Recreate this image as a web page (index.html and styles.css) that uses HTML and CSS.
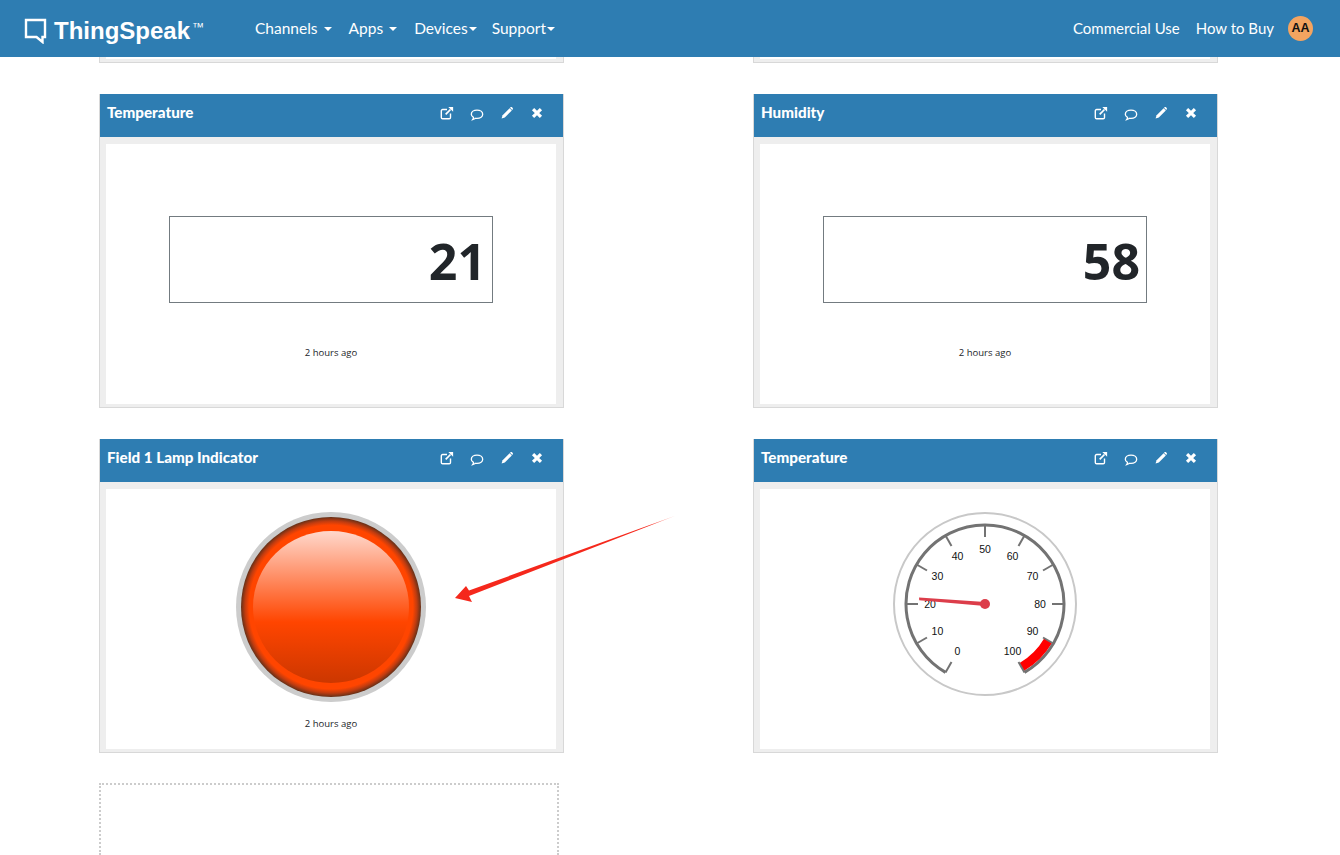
FILE: index.html
```html
<!DOCTYPE html>
<html lang="en">
<head>
    <title>ThingSpeak</title>
    <link rel="stylesheet" href="styles.css">
</head>
<body>
    <nav class="navbar">
        <a class="brand">
            <svg class="brand-icon" width="23" height="26" viewBox="0 0 23 26">
                <path d="M2 2H21V19H18.5V24L12.5 19H2Z" fill="none" stroke="#fff" stroke-width="2.4"/>
            </svg>
            <span class="brand-name">ThingSpeak</span><span class="brand-tm">™</span>
        </a>
        <ul class="nav-left">
            <li class="nav-channels">Channels<i class="caret caret-wide"></i></li>
            <li class="nav-apps">Apps<i class="caret caret-wide"></i></li>
            <li class="nav-devices">Devices<i class="caret"></i></li>
            <li>Support<i class="caret"></i></li>
        </ul>
        <ul class="nav-right">
            <li>Commercial Use</li>
            <li>How to Buy</li>
            <li class="avatar">AA</li>
        </ul>
    </nav>

    <main class="windows">
        <div class="sliver"><div></div></div>
        <div class="sliver"><div></div></div>

        <section class="card">
            <header class="card-head">
                <h2>Temperature</h2>
                <div class="card-tools">
                    <svg width="14" height="14" viewBox="0 0 16 16"><path d="M12 8.5V13a1.5 1.5 0 0 1-1.500 1.500H3A1.500 1.500 0 0 1 1.500 13V5.500A1.500 1.500 0 0 1 3 4H8" fill="none" stroke="#fff" stroke-width="1.600"/><path d="M6.500 9.500L12 4" stroke="#fff" stroke-width="2"/><path d="M9.500 1H15V6.500Z" fill="#fff"/></svg>
                    <svg class="tool-comment" width="14" height="14" viewBox="0 0 16 16"><path d="M8 2.500C4.200 2.500 1.500 4.600 1.500 7.200C1.500 8.800 2.500 10 4 10.800C3.900 11.700 3.500 12.600 3 13.300C4.400 13 5.600 12.400 6.400 11.800C6.900 11.900 7.400 11.900 8 11.900C11.800 11.900 14.500 9.800 14.500 7.200C14.500 4.600 11.800 2.500 8 2.500Z" fill="none" stroke="#fff" stroke-width="1.500"/></svg>
                    <svg width="14" height="14" viewBox="0 0 16 16"><path d="M11 2.500L13.500 5L5.500 13L1.800 14.200L3 10.500Z" fill="#fff"/><path d="M11.800 1.700C12.500 1 13.300 1 13.900 1.600L14.400 2.100C15 2.700 15 3.500 14.300 4.200L13.900 4.600L11.400 2.100Z" fill="#fff"/></svg>
                    <svg width="14" height="14" viewBox="0 0 16 16"><path d="M3.500 3.500L12.500 12.500M12.500 3.500L3.500 12.500" stroke="#fff" stroke-width="3.600"/></svg>
                </div>
            </header>
            <div class="card-body">
                <div class="panel panel-display">
                    <div class="value-box">21</div>
                    <p class="stamp stamp-display">2 hours ago</p>
                </div>
            </div>
        </section>

        <section class="card">
            <header class="card-head">
                <h2>Humidity</h2>
                <div class="card-tools">
                    <svg width="14" height="14" viewBox="0 0 16 16"><path d="M12 8.5V13a1.5 1.5 0 0 1-1.500 1.500H3A1.500 1.500 0 0 1 1.500 13V5.500A1.500 1.500 0 0 1 3 4H8" fill="none" stroke="#fff" stroke-width="1.600"/><path d="M6.500 9.500L12 4" stroke="#fff" stroke-width="2"/><path d="M9.500 1H15V6.500Z" fill="#fff"/></svg>
                    <svg class="tool-comment" width="14" height="14" viewBox="0 0 16 16"><path d="M8 2.500C4.200 2.500 1.500 4.600 1.500 7.200C1.500 8.800 2.500 10 4 10.800C3.900 11.700 3.500 12.600 3 13.300C4.400 13 5.600 12.400 6.400 11.800C6.900 11.900 7.400 11.900 8 11.900C11.800 11.900 14.500 9.800 14.500 7.200C14.500 4.600 11.800 2.500 8 2.500Z" fill="none" stroke="#fff" stroke-width="1.500"/></svg>
                    <svg width="14" height="14" viewBox="0 0 16 16"><path d="M11 2.500L13.500 5L5.500 13L1.800 14.200L3 10.500Z" fill="#fff"/><path d="M11.800 1.700C12.500 1 13.300 1 13.900 1.600L14.400 2.100C15 2.700 15 3.500 14.300 4.200L13.900 4.600L11.400 2.100Z" fill="#fff"/></svg>
                    <svg width="14" height="14" viewBox="0 0 16 16"><path d="M3.500 3.500L12.500 12.500M12.500 3.500L3.500 12.500" stroke="#fff" stroke-width="3.600"/></svg>
                </div>
            </header>
            <div class="card-body">
                <div class="panel panel-display">
                    <div class="value-box">58</div>
                    <p class="stamp stamp-display">2 hours ago</p>
                </div>
            </div>
        </section>

        <section class="card">
            <header class="card-head">
                <h2>Field 1 Lamp Indicator</h2>
                <div class="card-tools">
                    <svg width="14" height="14" viewBox="0 0 16 16"><path d="M12 8.5V13a1.5 1.5 0 0 1-1.500 1.500H3A1.500 1.500 0 0 1 1.500 13V5.500A1.500 1.500 0 0 1 3 4H8" fill="none" stroke="#fff" stroke-width="1.600"/><path d="M6.500 9.500L12 4" stroke="#fff" stroke-width="2"/><path d="M9.500 1H15V6.500Z" fill="#fff"/></svg>
                    <svg class="tool-comment" width="14" height="14" viewBox="0 0 16 16"><path d="M8 2.500C4.200 2.500 1.500 4.600 1.500 7.200C1.500 8.800 2.500 10 4 10.800C3.900 11.700 3.500 12.600 3 13.300C4.400 13 5.600 12.400 6.400 11.800C6.900 11.900 7.400 11.900 8 11.900C11.800 11.900 14.500 9.800 14.500 7.200C14.500 4.600 11.800 2.500 8 2.500Z" fill="none" stroke="#fff" stroke-width="1.500"/></svg>
                    <svg width="14" height="14" viewBox="0 0 16 16"><path d="M11 2.500L13.500 5L5.500 13L1.800 14.200L3 10.500Z" fill="#fff"/><path d="M11.800 1.700C12.500 1 13.300 1 13.900 1.600L14.400 2.100C15 2.700 15 3.500 14.300 4.200L13.900 4.600L11.400 2.100Z" fill="#fff"/></svg>
                    <svg width="14" height="14" viewBox="0 0 16 16"><path d="M3.500 3.500L12.500 12.500M12.500 3.500L3.500 12.500" stroke="#fff" stroke-width="3.600"/></svg>
                </div>
            </header>
            <div class="card-body">
                <div class="panel panel-lamp">
                    <svg width="190" height="190" viewBox="0 0 190 190">
                        <defs>
                            <radialGradient id="lampRim">
                                <stop offset="0.91" stop-color="#ff4500"/>
                                <stop offset="0.955" stop-color="#c03c10"/>
                                <stop offset="1" stop-color="#643018"/>
                            </radialGradient>
                            <linearGradient id="lampGlass" x1="0" y1="0" x2="0" y2="1">
                                <stop offset="0" stop-color="#ffd8cc"/>
                                <stop offset="0.6" stop-color="#ff4500"/>
                                <stop offset="1" stop-color="#cc3700"/>
                            </linearGradient>
                        </defs>
                        <circle cx="95" cy="95" r="95" fill="#cccccc"/>
                        <circle cx="95" cy="95" r="90" fill="url(#lampRim)"/>
                        <ellipse cx="95" cy="95" rx="78" ry="76" fill="url(#lampGlass)"/>
                    </svg>
                    <p class="stamp stamp-lamp">2 hours ago</p>
                </div>
            </div>
        </section>

        <section class="card">
            <header class="card-head">
                <h2>Temperature</h2>
                <div class="card-tools">
                    <svg width="14" height="14" viewBox="0 0 16 16"><path d="M12 8.5V13a1.5 1.5 0 0 1-1.500 1.500H3A1.500 1.500 0 0 1 1.500 13V5.500A1.500 1.500 0 0 1 3 4H8" fill="none" stroke="#fff" stroke-width="1.600"/><path d="M6.500 9.500L12 4" stroke="#fff" stroke-width="2"/><path d="M9.500 1H15V6.500Z" fill="#fff"/></svg>
                    <svg class="tool-comment" width="14" height="14" viewBox="0 0 16 16"><path d="M8 2.500C4.200 2.500 1.500 4.600 1.500 7.200C1.500 8.800 2.500 10 4 10.800C3.900 11.700 3.500 12.600 3 13.300C4.400 13 5.600 12.400 6.400 11.800C6.900 11.900 7.400 11.900 8 11.900C11.800 11.900 14.500 9.800 14.500 7.200C14.500 4.600 11.800 2.500 8 2.500Z" fill="none" stroke="#fff" stroke-width="1.500"/></svg>
                    <svg width="14" height="14" viewBox="0 0 16 16"><path d="M11 2.500L13.500 5L5.500 13L1.800 14.200L3 10.500Z" fill="#fff"/><path d="M11.800 1.700C12.500 1 13.300 1 13.900 1.600L14.400 2.100C15 2.700 15 3.500 14.300 4.200L13.900 4.600L11.400 2.100Z" fill="#fff"/></svg>
                    <svg width="14" height="14" viewBox="0 0 16 16"><path d="M3.500 3.500L12.500 12.500M12.500 3.500L3.500 12.500" stroke="#fff" stroke-width="3.600"/></svg>
                </div>
            </header>
            <div class="card-body">
                <div class="panel panel-gauge">
                    <svg class="gauge" width="190" height="190" viewBox="0 0 190 190">
                        <circle cx="95" cy="95" r="91" fill="none" stroke="#c8c8c8" stroke-width="2"/>
                        <path d="M55.500 163.400A79 79 0 1 1 134.500 163.400" fill="none" stroke="#737373" stroke-width="3"/>
                        <path d="M131.500 158.100A73 73 0 0 0 158.200 131.500" fill="none" stroke="#ff0000" stroke-width="9"/>
                        <g stroke="#737373" stroke-width="2">
                            <line x1="95" y1="16" x2="95" y2="28" transform="rotate(-150 95 95)"/>
                            <line x1="95" y1="16" x2="95" y2="28" transform="rotate(-120 95 95)"/>
                            <line x1="95" y1="16" x2="95" y2="28" transform="rotate(-90 95 95)"/>
                            <line x1="95" y1="16" x2="95" y2="28" transform="rotate(-60 95 95)"/>
                            <line x1="95" y1="16" x2="95" y2="28" transform="rotate(-30 95 95)"/>
                            <line x1="95" y1="16" x2="95" y2="28"/>
                            <line x1="95" y1="16" x2="95" y2="28" transform="rotate(30 95 95)"/>
                            <line x1="95" y1="16" x2="95" y2="28" transform="rotate(60 95 95)"/>
                            <line x1="95" y1="16" x2="95" y2="28" transform="rotate(90 95 95)"/>
                            <line x1="95" y1="16" x2="95" y2="28" transform="rotate(120 95 95)"/>
                            <line x1="95" y1="16" x2="95" y2="28" transform="rotate(150 95 95)"/>
                        </g>
                        <g class="gauge-labels">
                            <text x="67.500" y="146">0</text>
                            <text x="47.400" y="126">10</text>
                            <text x="40" y="99">20</text>
                            <text x="47.400" y="71">30</text>
                            <text x="67.500" y="51">40</text>
                            <text x="95" y="44">50</text>
                            <text x="122.500" y="51">60</text>
                            <text x="142.600" y="71">70</text>
                            <text x="150" y="99">80</text>
                            <text x="142.600" y="126">90</text>
                            <text x="122.500" y="146">100</text>
                        </g>
                        <polygon points="29,88.500 29.200,91.200 95,97 95,93" fill="#dc3d4a"/>
                        <circle cx="95" cy="95" r="5" fill="#dc3d4a"/>
                    </svg>
                </div>
            </div>
        </section>

        <div class="empty-slot"></div>
    </main>

    <svg class="arrow" width="240" height="100" viewBox="0 0 240 100">
        <defs>
            <linearGradient id="arrowFade" x1="1" y1="0" x2="0" y2="0">
                <stop offset="0" stop-color="#ff2a1a" stop-opacity="0.3"/>
                <stop offset="0.12" stop-color="#f5281c"/>
                <stop offset="1" stop-color="#f5281c"/>
            </linearGradient>
        </defs>
        <polygon points="226,5.500 19,80.500 16,76 5,88 22,92 19,86" fill="url(#arrowFade)"/>
    </svg>
</body>
</html>
```

FILE: styles.css
```css
html, body {
    height: 855px;
    overflow: hidden;
}
body {
    position: relative;
    margin: 0;
    background-color: #fff;
    font-family: "Open Sans", sans-serif;
    color: #212529;
}
ul {
    list-style: none;
    margin: 0;
    padding: 0;
}

/* top bar */
.navbar {
    display: flex;
    align-items: center;
    height: 57px;
    padding: 0 27px 0 24px;
    background-color: #2e7db2;
    color: #fff;
    font-family: Lato, sans-serif;
}
.brand {
    display: flex;
    align-items: center;
    width: 231px;
}
.brand-icon {
    margin: 5px 7px 0 0;
}
.brand-name {
    font-family: "Liberation Sans", sans-serif;
    font-weight: bold;
    font-size: 24px;
    margin-top: 5px;
}
.brand-tm {
    font-family: "Liberation Sans", sans-serif;
    font-size: 12px;
    margin: -3px 0 0 2px;
}
.nav-left {
    display: flex;
    gap: 16px;
    font-size: 15.500px;
    margin-bottom: 2px;
}
.nav-channels, .nav-apps {
    margin-right: 1px;
}
.nav-devices {
    margin-right: -1px;
}
.nav-right {
    display: flex;
    align-items: center;
    gap: 16px;
    margin-left: auto;
    font-size: 15px;
}
.nav-right li:not(.avatar) {
    margin-bottom: 2px;
}
.caret {
    display: inline-block;
    margin-left: 1px;
    vertical-align: 3px;
    border-top: 4px solid #fff;
    border-left: 4px solid transparent;
    border-right: 4px solid transparent;
}
.caret-wide {
    margin-left: 6px;
}
.avatar {
    width: 25px;
    height: 25px;
    border-radius: 50%;
    background-color: #f4a460;
    color: #111;
    font-family: "Liberation Sans", sans-serif;
    font-size: 12.500px;
    font-weight: bold;
    line-height: 25px;
    text-align: center;
    margin-left: -2px;
}

/* dashboard grid */
.windows {
    display: grid;
    grid-template-columns: 465px 465px;
    column-gap: 189px;
    row-gap: 31px;
    padding-left: 99px;
}
.sliver {
    box-sizing: border-box;
    height: 6px;
    background-color: #eee;
    border: 1px solid #d8d8d8;
    border-top: none;
    padding: 0 7px 0 6px;
}
.sliver div {
    height: 2px;
    background-color: #fff;
}
.card {
    border: 1px solid #d8d8d8;
    border-top: none;
}
.card-head {
    display: flex;
    align-items: center;
    justify-content: space-between;
    height: 43px;
    padding: 0 19px 0 7px;
    background-color: #2e7db2;
    color: #fff;
}
.card-head h2 {
    margin: 0 0 8px;
    font-family: Lato, sans-serif;
    font-size: 15.200px;
    font-weight: 900;
}
.card-tools {
    display: flex;
    gap: 16px;
    margin-bottom: 4px;
}
.tool-comment {
    margin-top: 2px;
}
.card-body {
    padding: 7px 7px 3px 6px;
    background-color: #eee;
}
.panel {
    box-sizing: border-box;
    display: flex;
    flex-direction: column;
    align-items: center;
    height: 260px;
    background-color: #fff;
}
.panel-display {
    padding-top: 72px;
}
.panel-lamp {
    padding-top: 23px;
}
.panel-gauge {
    padding-top: 20px;
}
.value-box {
    box-sizing: border-box;
    width: 324px;
    height: 87px;
    padding-right: 6px;
    border: 1px solid #737b80;
    font-size: 50px;
    font-weight: bold;
    line-height: 88px;
    text-align: right;
}
.stamp {
    margin: 0;
    font-size: 9.500px;
    line-height: 14px;
}
.stamp-display {
    margin-top: 43px;
}
.stamp-lamp {
    margin-top: 15px;
}
.gauge-labels text {
    font-family: "Liberation Sans", sans-serif;
    font-size: 10.500px;
    text-anchor: middle;
    fill: #111;
}
.empty-slot {
    box-sizing: border-box;
    width: 460px;
    height: 72px;
    margin-top: -1px;
    border: 2px dotted #ccc;
    border-bottom: none;
}

/* annotation drawn over the page */
.arrow {
    position: absolute;
    left: 450px;
    top: 510px;
}
```
